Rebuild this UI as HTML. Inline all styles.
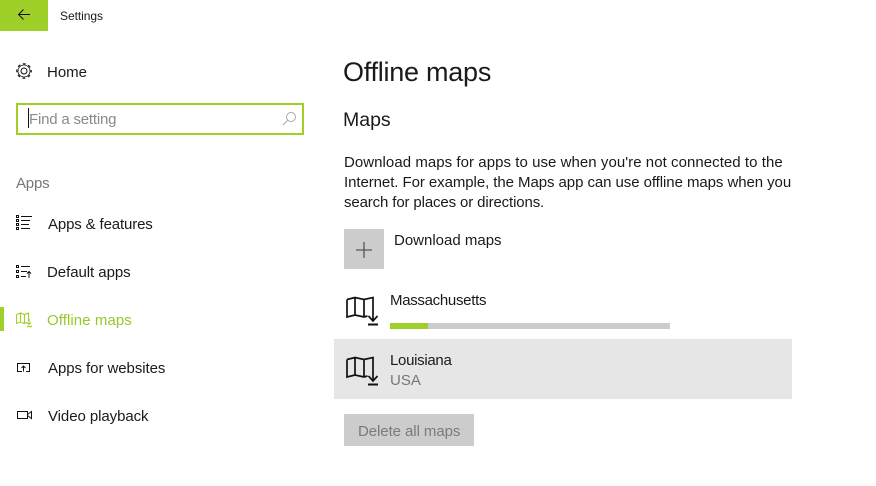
<!DOCTYPE html>
<html><head><meta charset="utf-8"><style>
html,body{margin:0;padding:0;background:#fff}
body{width:876px;height:486px;overflow:hidden;position:relative;font-family:"Liberation Sans",sans-serif;color:#1a1a1a}
.t{position:absolute;white-space:nowrap;font-size:15px;line-height:20px}
.a{position:absolute}
svg{position:absolute;overflow:visible}
svg.i{fill:none;stroke:#111;stroke-width:1}
</style></head><body>
<div class="a" style="left:0;top:0;width:48px;height:31px;background:#9fd02a"></div>
<svg class="i" style="left:0;top:0" width="48" height="31"><path d="M18.500 14.500H30M23.500 9.500L18.500 14.500L23.500 19.500" stroke-width="1"/></svg>
<div class="t" style="left:60px;top:6px;font-size:12px;letter-spacing:-.05px">Settings</div>

<svg class="i" style="left:16px;top:63px" width="16" height="16"><circle cx="8" cy="8" r="3"/><circle cx="8" cy="8" r="6" stroke-width=".8"/><circle cx="8" cy="8" r="7.200" stroke-width="1.200" stroke-dasharray="2.830 2.830" stroke-dashoffset="1.400"/></svg>
<div class="t" style="left:47px;top:63px">Home</div>

<div class="a" style="left:16px;top:103px;width:284px;height:28px;border:2px solid #9fd02a"></div>
<div class="a" style="left:28px;top:108px;width:1px;height:20px;background:#111"></div>
<div class="t" style="left:29px;top:110px;color:#8a8a8a;letter-spacing:-.2px">Find a setting</div>
<svg class="i" style="left:275px;top:105px;stroke:#aaa" width="30" height="28"><circle cx="16" cy="12" r="4.500"/><path d="M12.800 15.200L8 20"/></svg>

<div class="t" style="left:16px;top:174px;color:#767676;letter-spacing:-.2px">Apps</div>

<svg class="i" style="left:16px;top:215px" width="16" height="16"><path d="M.5.500h2v2h-2zM.5 4.500h2v2h-2zM.5 8.500h2v2h-2zM.5 12.500h2v2h-2zM5 1.500h11M5 5.500h9M5 9.500h8M5 13.500h9"/></svg>
<div class="t" style="left:48px;top:215px;letter-spacing:-.14px">Apps &amp; features</div>

<svg class="i" style="left:16px;top:265px" width="17" height="14"><path d="M.5.500h2v2h-2zM.5 5.500h2v2h-2zM.5 10.500h2v2h-2zM5 1.500h9M5 6.500h6M5 11.500h5M13 13V6.500M11 8.500l2-2 2 2"/></svg>
<div class="t" style="left:47px;top:263px;letter-spacing:-.05px">Default apps</div>

<div class="a" style="left:0;top:307px;width:4px;height:24px;background:#9fd02a"></div>
<svg class="i" style="left:16px;top:312px;stroke:#9fd02a" width="17" height="15"><path d="M.5 2.500L4.500 1 8.500 2.500 12.500 1V9M.5 2.500V11.500L4.500 10 8.500 11.500 11 10.500M4.500 1V10M8.500 2.500V11.500M13 7V12M11 10.500L13 12.500 15 10.500" stroke-width="1.100"/><path d="M11 14.500H16" stroke-width="1.300"/></svg>
<div class="t" style="left:47px;top:311px;color:#94c92c;letter-spacing:.08px">Offline maps</div>

<svg class="i" style="left:17px;top:363px" width="15" height="13"><path d="M5 8.500H.5V.5H12.500V8.500H9M6.500 8.500V3M4.500 5L6.500 3 8.500 5"/></svg>
<div class="t" style="left:48px;top:359px;letter-spacing:-.06px">Apps for websites</div>

<svg class="i" style="left:17px;top:411px" width="16" height="9"><path d="M.5.500H10.500V7.500H.5zM10.500 3.500L14.500.5V7.500L10.500 4.500"/></svg>
<div class="t" style="left:48px;top:407px;letter-spacing:-.07px">Video playback</div>

<div class="t" style="left:343px;top:55px;font-size:27px;line-height:34px;letter-spacing:-.25px">Offline maps</div>
<div class="t" style="left:343px;top:108px;font-size:19.500px;line-height:24px">Maps</div>
<div class="t" style="left:344px;top:153px;letter-spacing:.05px">Download maps for apps to use when you're not connected to the</div>
<div class="t" style="left:344px;top:173px;letter-spacing:-.07px">Internet. For example, the Maps app can use offline maps when you</div>
<div class="t" style="left:344px;top:193px;letter-spacing:-.13px">search for places or directions.</div>

<div class="a" style="left:344px;top:229px;width:40px;height:40px;background:#ccc"></div>
<svg class="i" style="left:344px;top:229px;stroke:#555;stroke-width:1.300" width="40" height="40"><path d="M12 21H28M20 13V29"/></svg>
<div class="t" style="left:394px;top:231px">Download maps</div>

<svg class="i" style="left:340px;top:292px;stroke-width:1.700" width="40" height="36"><path d="M7 7.500L15 5.500 24 7.500 33 5.500V29M7 7.500V25L15 23 24 25 27.500 24M15 5.500V23M24 7.500V25M28.500 24L33 29 37.500 24"/><path d="M28 32.500H38" stroke-width="2"/></svg>
<div class="t" style="left:390px;top:291px;letter-spacing:-.3px">Massachusetts</div>
<div class="a" style="left:390px;top:323px;width:280px;height:6px;background:#ccc"></div>
<div class="a" style="left:390px;top:323px;width:38px;height:6px;background:#9fd02a"></div>

<div class="a" style="left:334px;top:339px;width:458px;height:60px;background:#e6e6e6"></div>
<svg class="i" style="left:340px;top:352px;stroke-width:1.700" width="40" height="36"><path d="M7 7.500L15 5.500 24 7.500 33 5.500V29M7 7.500V25L15 23 24 25 27.500 24M15 5.500V23M24 7.500V25M28.500 24L33 29 37.500 24"/><path d="M28 32.500H38" stroke-width="2"/></svg>
<div class="t" style="left:390px;top:351px;letter-spacing:-.3px">Louisiana</div>
<div class="t" style="left:390px;top:371px;color:#777">USA</div>

<div class="a" style="left:344px;top:414px;width:130px;height:32px;background:#ccc"></div>
<div class="t" style="left:358px;top:422px;color:#7a7a7a;letter-spacing:-.07px">Delete all maps</div>
</body></html>
